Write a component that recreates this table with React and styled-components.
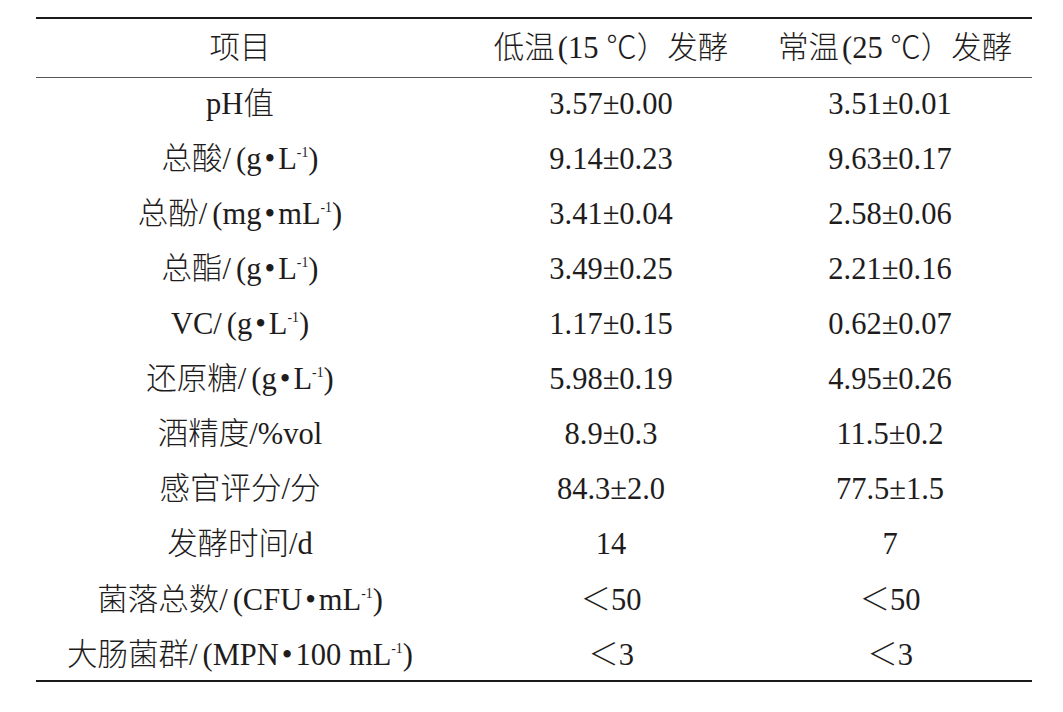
import styled, { createGlobalStyle } from "styled-components";

const GlobalStyle = createGlobalStyle`
  html, body {
    margin: 0;
    padding: 0;
    background: #ffffff;
  }
`;

const Page = styled.div`
  width: 1063px;
  height: 712px;
  padding: 17px 0 0 36px;
  box-sizing: border-box;
  font-family: "Liberation Serif", "Noto Sans CJK SC", serif;
  color: #1e1c1c;
`;

const Table = styled.div`
  width: 996px;
  border-top: 2.5px solid #1a1a1a;
  border-bottom: 2.5px solid #1a1a1a;
`;

const Head = styled.div`
  display: grid;
  grid-template-columns: 408px 334px 224px;
  height: 58px;
  align-items: center;
  border-bottom: 1.5px solid #555555;
`;

const Body = styled.div`
  display: flex;
  flex-direction: column;
  margin: -1.6px 0 -2.5px;
`;

const Row = styled.div`
  display: grid;
  grid-template-columns: 408px 334px 224px;
  height: 55.1px;
  align-items: center;
`;

const Cell = styled.div`
  font-size: 30.5px;
  font-weight: 300;
  line-height: 1;
  text-align: center;
  white-space: nowrap;
`;

const Num = styled.span`
  font-family: "Liberation Serif", serif;
  font-weight: 400;
`;

const Paren = styled.span`
  font-family: "Liberation Serif", serif;
  margin-left: ${(p) => p.$gap || 0}px;
`;

const Dot = styled.span`
  font-family: "Liberation Serif", serif;
  margin: 0 3px;
`;

const Sup = styled.sup`
  font-size: 0.45em;
  vertical-align: 0.9em;
  line-height: 0;
`;

const Unit = ({ children }) => (
  <>
    <Paren $gap={5}>(</Paren>
    {children}
    <Sup>-1</Sup>)
  </>
);

const rows = [
  { label: <>pH值</>, low: "3.57±0.00", high: "3.51±0.01" },
  { label: <>总酸/<Unit>g<Dot>•</Dot>L</Unit></>, low: "9.14±0.23", high: "9.63±0.17" },
  { label: <>总酚/<Unit>mg<Dot>•</Dot>mL</Unit></>, low: "3.41±0.04", high: "2.58±0.06" },
  { label: <>总酯/<Unit>g<Dot>•</Dot>L</Unit></>, low: "3.49±0.25", high: "2.21±0.16" },
  { label: <>VC/<Unit>g<Dot>•</Dot>L</Unit></>, low: "1.17±0.15", high: "0.62±0.07" },
  { label: <>还原糖/<Unit>g<Dot>•</Dot>L</Unit></>, low: "5.98±0.19", high: "4.95±0.26" },
  { label: <>酒精度/%vol</>, low: "8.9±0.3", high: "11.5±0.2" },
  { label: <>感官评分/分</>, low: "84.3±2.0", high: "77.5±1.5" },
  { label: <>发酵时间/d</>, low: "14", high: "7" },
  { label: <>菌落总数/<Unit>CFU<Dot>•</Dot>mL</Unit></>, low: "＜50", high: "＜50" },
  { label: <>大肠菌群/<Unit>MPN<Dot>•</Dot>100 mL</Unit></>, low: "＜3", high: "＜3" },
];

const Value = ({ text }) =>
  text.startsWith("＜") ? (
    <>
      ＜<Num>{text.slice(1)}</Num>
    </>
  ) : (
    <Num>{text}</Num>
  );

const App = () => {
  return (
    <Page>
      <GlobalStyle />
      <Table>
        <Head>
          <Cell>项目</Cell>
          <Cell>
            低温<Paren $gap={3}>(</Paren>
            <Num>15</Num> ℃）发酵
          </Cell>
          <Cell>
            常温<Paren $gap={3}>(</Paren>
            <Num>25</Num> ℃）发酵
          </Cell>
        </Head>
        <Body>
          {rows.map((r, i) => (
            <Row key={i}>
              <Cell>{r.label}</Cell>
              <Cell>
                <Value text={r.low} />
              </Cell>
              <Cell>
                <Value text={r.high} />
              </Cell>
            </Row>
          ))}
        </Body>
      </Table>
    </Page>
  );
};

export default App;
